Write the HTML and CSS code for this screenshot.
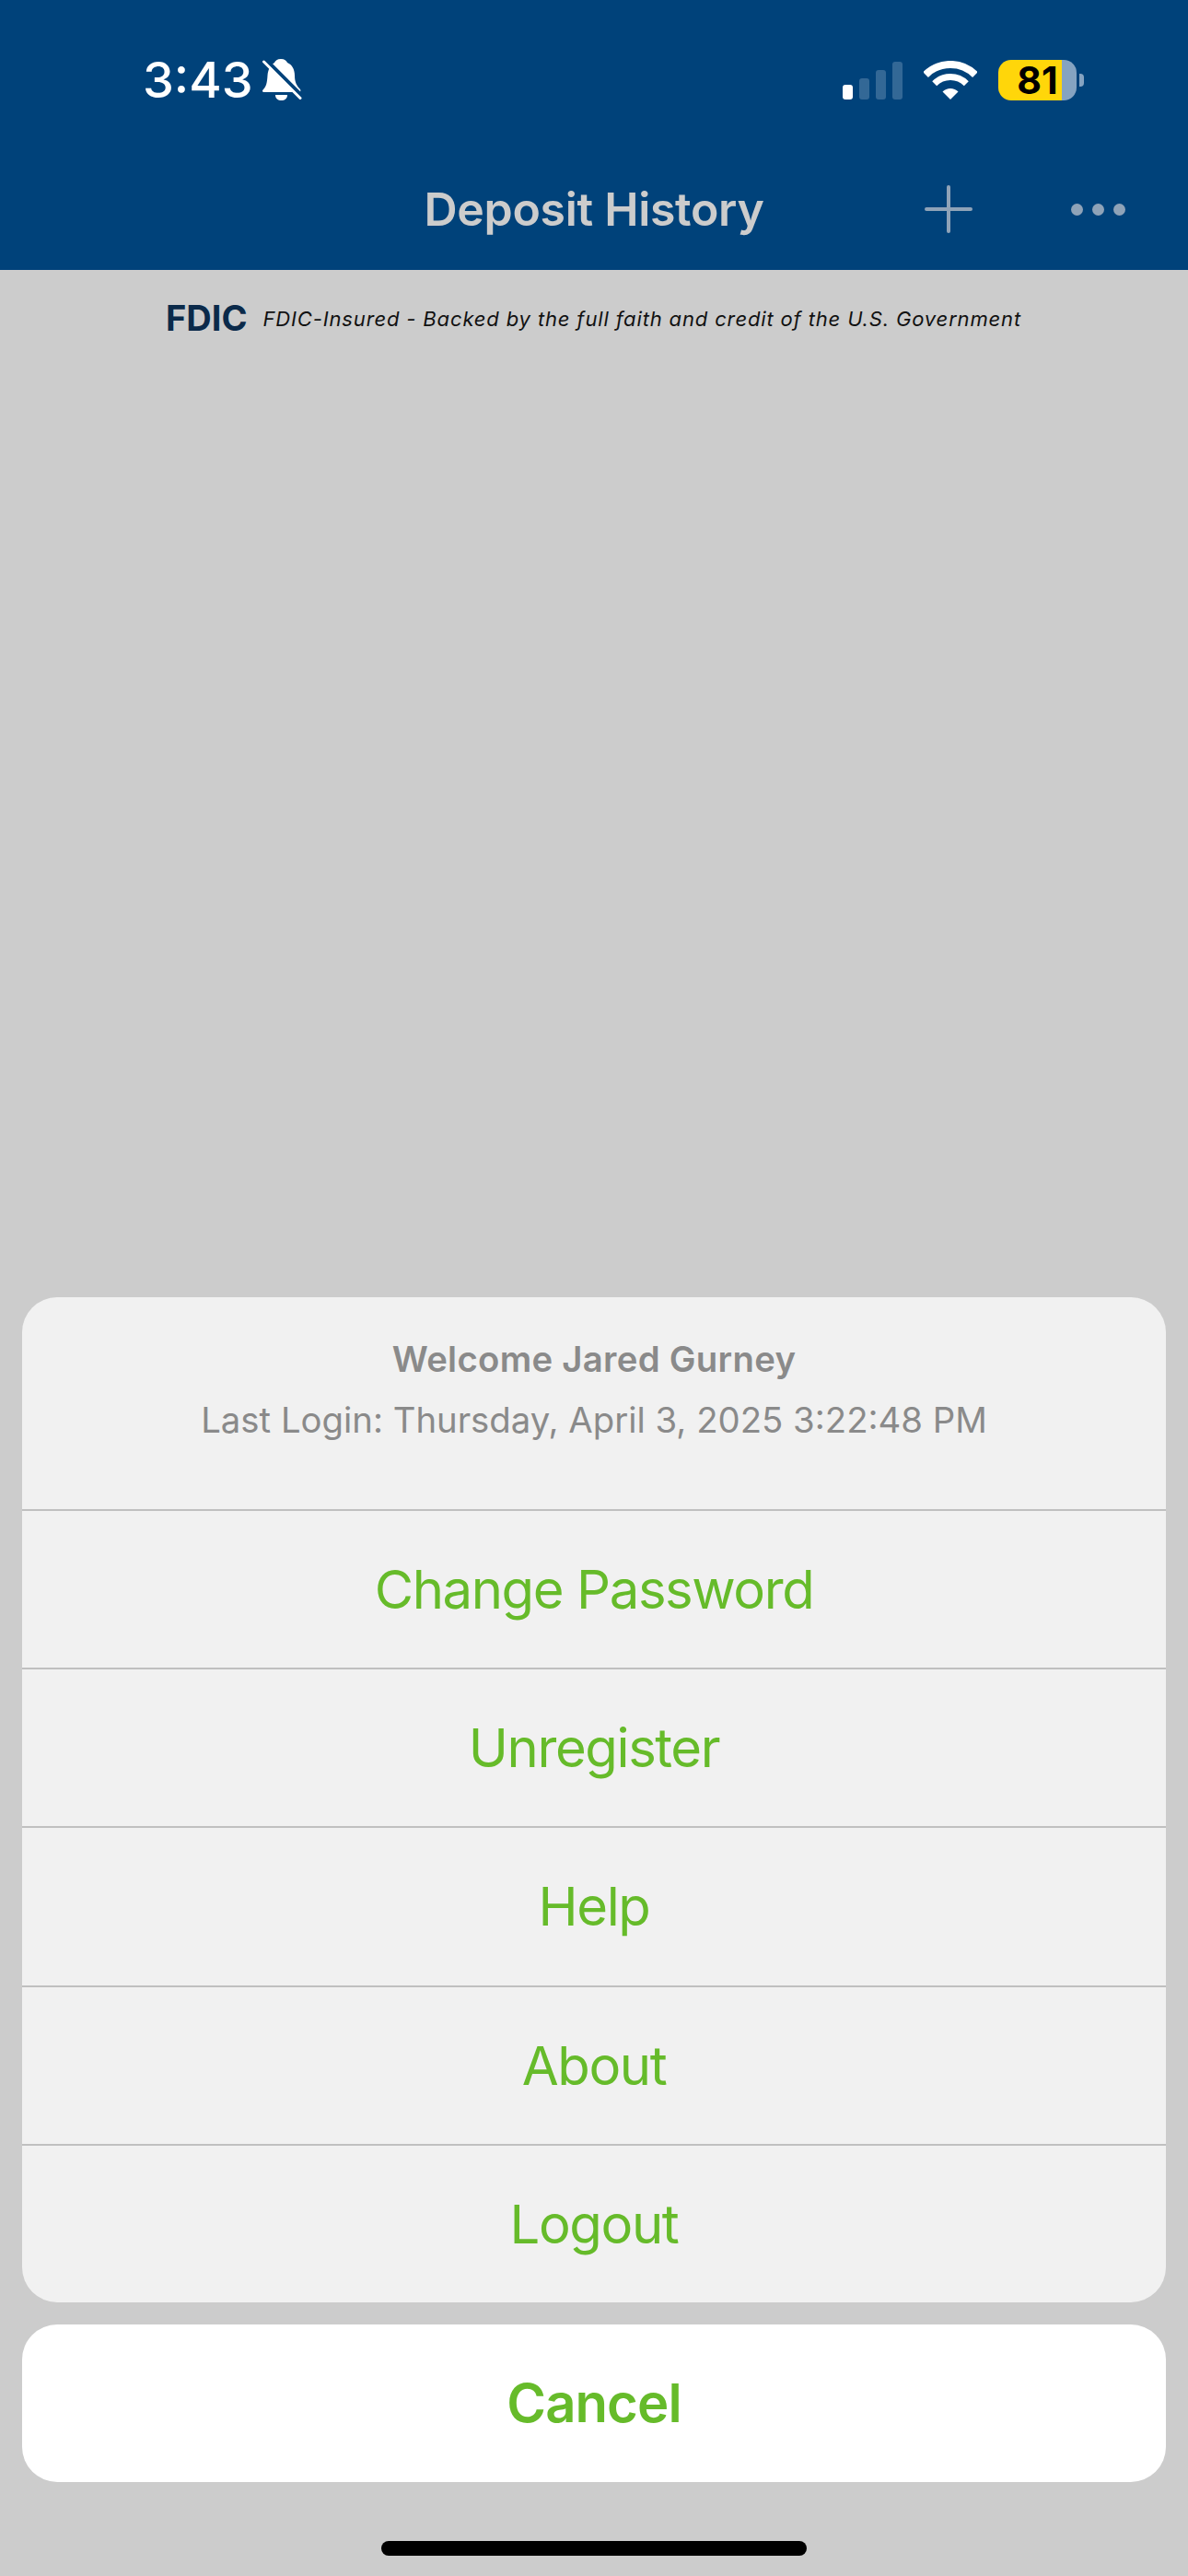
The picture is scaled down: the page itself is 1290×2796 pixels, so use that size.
FILE: index.html
```html
<!DOCTYPE html>
<html>
<head>
  <title>Deposit History</title>
  <link rel="stylesheet" href="styles.css">
</head>
<body>

<header class="header">
  <div class="status-bar">
    <span class="time">3:43</span>
    <svg class="bell" viewBox="0 0 44 46">
      <path class="bell-body" d="M20 0C24 0 26 2 27 4C32 6 35 11 35 18C35 25 37 29 41 33C42 35 41 36 39 36H2C0 36 -1 35 1 33C4 30 5 26 5.500 18C6 11 9 6 13 4C14 2 16 0 20 0Z"/>
      <path class="bell-body" d="M14 39H27C27 43 24 45 20.500 45C17 45 14 43 14 39Z"/>
      <path class="bell-gap" d="M3 0L44 41"/>
      <path class="bell-slash" d="M1.500 3L41 42.500"/>
    </svg>
    <div class="status-right">
      <div class="signal">
        <span class="bar bar-on bar-1"></span>
        <span class="bar bar-2"></span>
        <span class="bar bar-3"></span>
        <span class="bar bar-4"></span>
      </div>
      <svg class="wifi" viewBox="0 0 58 43">
        <path class="wifi-arc wifi-outer" d="M2.100 15.100A38 38 0 0 1 55.900 15.100"/>
        <path class="wifi-arc wifi-middle" d="M11.700 24.700A24.500 24.500 0 0 1 46.300 24.700"/>
        <path class="wifi-dot" d="M29 42L20.500 33.500A12 12 0 0 1 37.500 33.500Z"/>
      </svg>
      <div class="battery">
        <div class="battery-body"><span class="battery-level">81</span></div>
        <span class="battery-cap"></span>
      </div>
    </div>
  </div>
  <nav class="nav">
    <span></span>
    <h1 class="nav-title">Deposit History</h1>
    <div class="nav-actions">
      <span class="plus"></span>
      <span class="dots"><i></i><i></i><i></i></span>
    </div>
  </nav>
</header>

<div class="fdic">
  <span class="fdic-mark">FDIC</span>
  <span class="fdic-text">FDIC-Insured - Backed by the full faith and credit of the U.S. Government</span>
</div>

<div class="sheet">
  <div class="sheet-group">
    <div class="sheet-head">
      <div class="sheet-title">Welcome Jared Gurney</div>
      <div class="sheet-message">Last Login: Thursday, April 3, 2025 3:22:48 PM</div>
    </div>
    <div class="sheet-item">Change Password</div>
    <div class="sheet-item">Unregister</div>
    <div class="sheet-item">Help</div>
    <div class="sheet-item">About</div>
    <div class="sheet-item">Logout</div>
  </div>
  <div class="sheet-cancel">Cancel</div>
</div>

<div class="home-area"><span class="home-bar"></span></div>

</body>
</html>
```

FILE: styles.css
```css
* {
  box-sizing: border-box;
}

body {
  margin: 0;
  width: 1290px;
  height: 2796px;
  background: #ccc;
  font-family: Inter, "Liberation Sans", sans-serif;
  display: flex;
  flex-direction: column;
  overflow: hidden;
}

.header {
  height: 293px;
  background: #00427a;
}

.status-bar {
  display: flex;
  align-items: center;
  height: 46px;
  margin-top: 64px;
  padding: 0 113px 0 155px;
}

.time {
  color: #fff;
  font-size: 54px;
  font-weight: 500;
  line-height: 48px;
}

.bell {
  width: 44px;
  height: 46px;
  margin-left: 10px;
}

.bell-body {
  fill: #fff;
}

.bell-gap {
  stroke: #00427a;
  stroke-width: 4;
  fill: none;
}

.bell-slash {
  stroke: #fff;
  stroke-width: 3;
  stroke-linecap: round;
  fill: none;
}

.status-right {
  display: flex;
  align-items: center;
  gap: 23px;
  margin-left: auto;
}

.signal {
  display: flex;
  align-items: flex-end;
  gap: 7px;
  height: 41px;
}

.bar {
  width: 11px;
  border-radius: 3px;
  background: #336896;
}

.bar-on {
  background: #fff;
}

.bar-1 { height: 16px; }
.bar-2 { height: 23px; }
.bar-3 { height: 32px; }
.bar-4 { height: 41px; }

.wifi {
  width: 58px;
  height: 43px;
}

.wifi-arc {
  fill: none;
  stroke: #fff;
}

.wifi-outer {
  stroke-width: 8;
}

.wifi-middle {
  stroke-width: 7;
}

.wifi-dot {
  fill: #fff;
}

.battery {
  display: flex;
  align-items: center;
  gap: 3px;
}

.battery-body {
  width: 85px;
  height: 44px;
  border-radius: 14px;
  background: linear-gradient(to right, #ffd60a 69px, #85a3c1 69px);
  text-align: center;
  color: #000;
  font-size: 41px;
  font-weight: 700;
  line-height: 44px;
}

.battery-cap {
  width: 5px;
  height: 14px;
  border-radius: 0 4px 4px 0;
  background: #85a3c1;
}

.nav {
  display: grid;
  grid-template-columns: 1fr auto 1fr;
  align-items: center;
  height: 54px;
  margin-top: 90px;
}

.nav-title {
  margin: 0;
  color: #ccc;
  font-size: 50px;
  font-weight: 600;
  letter-spacing: -0.3px;
  line-height: 54px;
}

.nav-actions {
  display: flex;
  align-items: center;
  justify-content: flex-end;
  gap: 107px;
  padding-right: 68px;
}

.plus {
  position: relative;
  width: 52px;
  height: 52px;
}

.plus::before,
.plus::after {
  content: "";
  position: absolute;
  background: #8fa3b8;
  border-radius: 3px;
}

.plus::before {
  left: 0;
  right: 0;
  top: 24px;
  height: 4px;
}

.plus::after {
  top: 0;
  bottom: 0;
  left: 24px;
  width: 4px;
}

.dots {
  display: flex;
  gap: 10px;
}

.dots i {
  width: 13px;
  height: 13px;
  border-radius: 50%;
  background: #8fa3b8;
}

.fdic {
  display: flex;
  align-items: center;
  gap: 17px;
  margin-top: 30px;
  padding-left: 180px;
}

.fdic-mark {
  color: #0b2a4a;
  font-size: 38px;
  font-weight: 700;
  line-height: 44px;
}

.fdic-text {
  margin-top: 2px;
  color: #111;
  font-size: 22px;
  font-style: italic;
  letter-spacing: 0.85px;
}

.sheet {
  margin-top: auto;
  padding: 0 24px;
}

.sheet-group {
  border-radius: 38px;
  background: #f1f1f1;
  overflow: hidden;
}

.sheet-head {
  height: 230px;
  padding-top: 43px;
  text-align: center;
  color: #8a8a8a;
  font-size: 38.300px;
}

.sheet-title {
  font-weight: 600;
  letter-spacing: 0.3px;
  line-height: 48px;
}

.sheet-message {
  margin-top: 18px;
  line-height: 48px;
}

.sheet-item {
  height: 172.200px;
  border-top: 2px solid #c0c0c0;
  text-align: center;
  color: #66bb2a;
  font-size: 58px;
  letter-spacing: -1.4px;
  line-height: 171px;
}

.sheet-cancel {
  height: 171px;
  margin-top: 24px;
  border-radius: 38px;
  background: #fff;
  text-align: center;
  color: #66bb2a;
  font-size: 58px;
  font-weight: 600;
  letter-spacing: -0.9px;
  line-height: 171px;
}

.home-area {
  display: flex;
  justify-content: center;
  height: 102px;
  padding-top: 64px;
}

.home-bar {
  width: 462px;
  height: 16px;
  border-radius: 8px;
  background: #000;
}
```
